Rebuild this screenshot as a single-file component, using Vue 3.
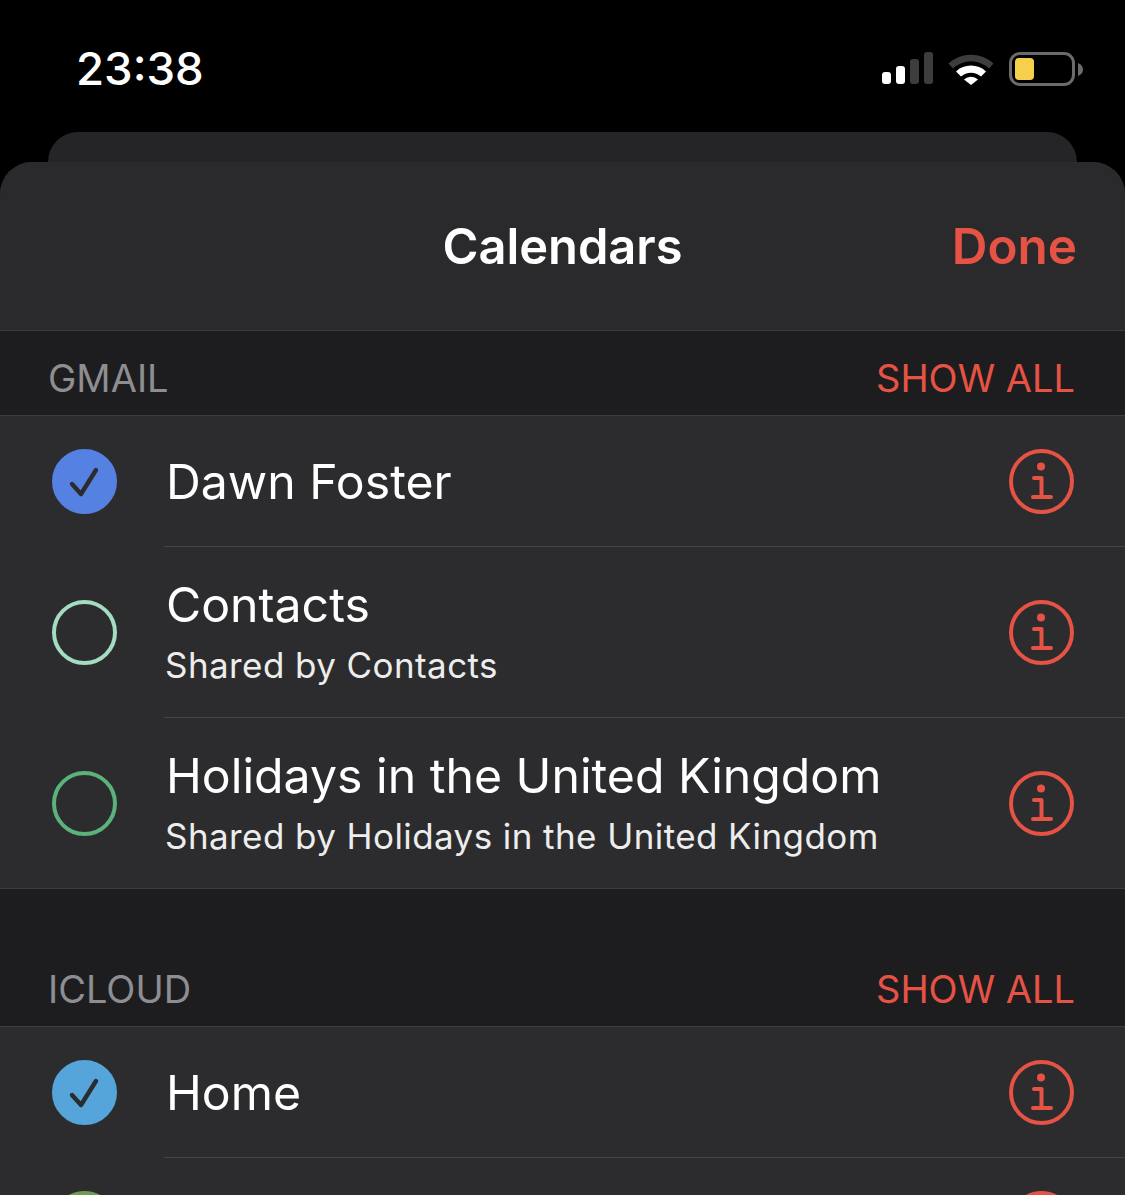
<template>
<div class="page">
  <div class="status">
    <span class="time">23:38</span>
    <div class="status-icons">
      <svg width="51" height="33" viewBox="0 0 51 33">
        <rect x="0" y="20" width="9" height="12" rx="3" fill="#fff" />
        <rect x="14" y="14" width="9" height="18" rx="3" fill="#fff" />
        <rect x="28" y="7" width="9" height="25" rx="3" fill="#3d3d3d" />
        <rect x="42" y="0" width="9" height="32" rx="3" fill="#3d3d3d" />
      </svg>
      <svg class="wifi" width="46" height="33" viewBox="0 0 46 33">
        <path d="M0.5 11.5 A33 33 0 0 1 45.5 11.5 L41 16.5 A26 26 0 0 0 5 16.5 Z" fill="#3d3d3d" />
        <path d="M8 19.5 A22 22 0 0 1 38 19.5 L33 24.5 A15 15 0 0 0 13 24.5 Z" fill="#fff" />
        <path d="M16 27.5 A10.5 10.5 0 0 1 30 27.5 L23 33 Z" fill="#fff" />
      </svg>
      <div class="battery">
        <div class="battery-body"><div class="battery-level"></div></div>
        <svg width="5" height="13" viewBox="0 0 5 13"><path d="M0 0 Q5 2 5 6.5 Q5 11 0 13 Z" fill="#6b6b6b" /></svg>
      </div>
    </div>
  </div>

  <div class="back-card"></div>
  <div class="sheet">
    <div class="nav">
      <span class="nav-title">Calendars</span>
      <span class="nav-done">Done</span>
    </div>

    <template v-for="(group, g) in groups" :key="group.name">
      <div v-if="g > 0" class="spacer"></div>
      <div class="section" :class="{ first: g === 0 }">
        <span class="section-name">{{ group.name }}</span>
        <span class="show-all">SHOW ALL</span>
      </div>
      <div class="list">
        <div v-for="(cal, i) in group.items" :key="i" class="row">
          <div class="check" :style="{ borderColor: cal.color, background: cal.on ? cal.color : 'transparent' }">
            <svg v-if="cal.on" width="65" height="65" viewBox="0 0 65 65">
              <path d="M20 35 L29 45 L44 21" fill="none" stroke="#2c2c2e" stroke-width="4.4" stroke-linecap="round" stroke-linejoin="round" />
            </svg>
          </div>
          <div class="row-body" :class="{ tall: cal.sub }">
            <div class="row-text">
              <div v-if="cal.title" class="row-title">{{ cal.title }}</div>
              <div v-if="cal.sub" class="row-sub">{{ cal.sub }}</div>
            </div>
            <svg class="info" width="65" height="65" viewBox="0 0 65 65">
              <circle cx="32.5" cy="32.5" r="30.5" fill="none" stroke="#e65345" stroke-width="4" />
              <circle cx="32" cy="17.5" r="4" fill="#e65345" />
              <path d="M25 29 H32.5 V48 M24 48 H42" fill="none" stroke="#e65345" stroke-width="4" stroke-linecap="round" stroke-linejoin="round" />
            </svg>
          </div>
        </div>
      </div>
    </template>
  </div>
</div>
</template>

<script setup>
const groups = [
  {
    name: 'GMAIL',
    items: [
      { title: 'Dawn Foster', color: '#5581e2', on: true },
      { title: 'Contacts', sub: 'Shared by Contacts', color: '#a3dcc0', on: false },
      { title: 'Holidays in the United Kingdom', sub: 'Shared by Holidays in the United Kingdom', color: '#5bb27a', on: false }
    ]
  },
  {
    name: 'ICLOUD',
    items: [
      { title: 'Home', color: '#55a5da', on: true },
      // the next calendar's name is below the fold, only its circle and icon show
      { title: '', color: '#6f9a52', on: false }
    ]
  }
]
</script>

<style>
html, body {
  margin: 0;
  background: #000;
}
</style>

<style scoped>
.page {
  width: 1125px;
  height: 1195px;
  overflow: hidden;
  background: #000;
  color: #fff;
  font-family: Inter, "Liberation Sans", sans-serif;
}
.status {
  height: 132px;
  display: flex;
  justify-content: space-between;
  padding: 0 42px 0 76px;
  box-sizing: border-box;
}
.time {
  font-size: 45.6px;
  font-weight: 500;
  line-height: 54px;
  margin-top: 42px;
}
.status-icons {
  display: flex;
  align-items: flex-start;
  padding-top: 52px;
}
.wifi {
  margin-left: 15px;
}
.battery {
  display: flex;
  align-items: center;
  gap: 3px;
  margin-left: 15px;
}
.battery-body {
  width: 66px;
  height: 34px;
  box-sizing: border-box;
  border: 3px solid #6b6b6b;
  border-radius: 11px;
  padding: 3px;
}
.battery-level {
  width: 19px;
  height: 22px;
  background: #f6d04d;
  border-radius: 4px;
}
.back-card {
  height: 60px;
  margin: 0 48px -30px;
  background: #252527;
  border-radius: 30px 30px 0 0;
}
.sheet {
  position: relative;
  background: #1d1d1f;
  border-radius: 32px 32px 0 0;
  overflow: hidden;
}
.nav {
  height: 168px;
  background: #2a2a2c;
  border-bottom: 1px solid #3d3d3f;
  display: flex;
  align-items: center;
  justify-content: center;
  position: relative;
}
.nav-title {
  font-size: 48.8px;
  font-weight: 600;
}
.nav-done {
  position: absolute;
  right: 48px;
  top: 54px;
  font-size: 49.4px;
  font-weight: 600;
  color: #e65345;
}
.spacer {
  height: 54px;
}
.section {
  height: 84px;
  display: flex;
  justify-content: space-between;
  align-items: flex-end;
  padding: 0 50px 15px 48px;
  box-sizing: border-box;
  border-bottom: 1px solid #3d3d3f;
}
.section.first {
  height: 85px;
}
.section-name {
  font-size: 38px;
  line-height: 44px;
  color: #8e8e92;
}
.show-all {
  font-size: 38px;
  line-height: 44px;
  color: #e65345;
}
.list {
  background: #2c2c2e;
  border-bottom: 1px solid #3d3d3f;
}
.row {
  display: flex;
  align-items: center;
  padding-left: 52px;
}
.check {
  width: 65px;
  height: 65px;
  box-sizing: border-box;
  border: 4px solid;
  border-radius: 50%;
  flex: none;
  position: relative;
  margin-right: 47px;
}
.check svg {
  position: absolute;
  left: -4px;
  top: -4px;
}
.row-body {
  flex: 1;
  height: 130px;
  display: flex;
  align-items: center;
  justify-content: space-between;
  padding-right: 51px;
  border-bottom: 1px solid #454547;
}
.row-body.tall {
  height: 170px;
}
.row:last-child .row-body {
  border-bottom: none;
}
.row-text {
  padding-left: 2px;
  padding-top: 2px;
}
.row-title {
  font-size: 48.2px;
  line-height: 56px;
}
.row-sub {
  font-size: 35px;
  line-height: 42px;
  letter-spacing: 0.42px;
  margin-top: 11px;
  margin-left: -1px;
  color: #ededed;
}
.tall .row-text {
  padding-top: 0;
  padding-bottom: 2px;
}
.info {
  flex: none;
}
</style>
